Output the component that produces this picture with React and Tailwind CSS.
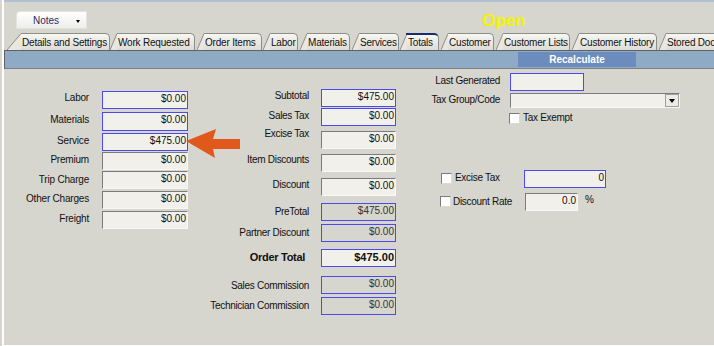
import React from 'react';

const tabs = [
  { label: 'Details and Settings', slant: 14, w: 'w-[89px]', gap: 'ml-[3px]' },
  { label: 'Work Requested', slant: 7, w: 'w-[78px]', gap: 'ml-0' },
  { label: 'Order Items', slant: 7, w: 'w-[58px]', gap: 'ml-[2px]' },
  { label: 'Labor', slant: 7, w: 'w-[28px]', gap: 'ml-[1px]' },
  { label: 'Materials', slant: 7, w: 'w-[43px]', gap: 'ml-[2px]' },
  { label: 'Services', slant: 7, w: 'w-[40px]', gap: 'ml-[2px]' },
  { label: 'Totals', slant: 7, w: 'w-[32px]', gap: 'ml-[1px]', active: true },
  { label: 'Customer', slant: 7, w: 'w-[46px]', gap: 'ml-[2px]' },
  { label: 'Customer Lists', slant: 7, w: 'w-[67px]', gap: 'ml-[2px]' },
  { label: 'Customer History', slant: 7, w: 'w-[78px]', gap: 'ml-[2px]' },
  { label: 'Stored Documents', slant: 7, w: 'w-[90px]', gap: 'ml-[2px]' },
];

function Tab({ t }) {
  return (
    <div className={`flex shrink-0 items-end h-[17px] ${t.gap}`}>
      <svg width={t.slant} height="17" className="block shrink-0">
        <polygon points={`0,17 ${t.slant},0 ${t.slant},17`} fill="#e8e7e1" />
        <line x1="0" y1="17" x2={t.slant} y2="0.5" stroke="#8e8e88" strokeWidth="1" />
        {t.active && <line x1={t.slant - 1} y1="1" x2={t.slant} y2="1" stroke="#1c2a6e" strokeWidth="2" />}
      </svg>
      <div
        className={`${t.w} shrink-0 h-[17px] border-r border-[#8e8e88] rounded-tr-[5px] bg-linear-to-b from-[#f7f7f3] to-[#dddcd5] pl-[1px] whitespace-nowrap overflow-hidden text-[10px] tracking-[-0.2px] text-[#111] ${
          t.active ? 'border-t-2 border-t-[#1c2a6e] leading-[16px]' : 'border-t leading-[17px]'
        }`}
      >
        {t.label}
      </div>
    </div>
  );
}

const kinds = {
  blue: 'border border-[#4a4af0] bg-[#f1f0ea] text-[#111]',
  sunk: 'border border-t-[#7b7b7b] border-l-[#7b7b7b] border-r-[#f7f7f3] border-b-[#f7f7f3] bg-[#f1f0ea] text-[#111]',
  blueGray: 'border border-[#4a4af0] bg-[#d6d5ce] text-[#333]',
};

function Field({ v, kind, w, h = 'h-[18px]', extra = '', bold }) {
  return (
    <div
      className={`${w} ${h} ${kinds[kind]} ${extra} shrink-0 flex justify-end pr-[1px] ${
        bold ? 'text-[11px] font-bold leading-[15px]' : 'text-[10px] leading-[14px]'
      }`}
    >
      {v}
    </div>
  );
}

const leftRows = [
  { l: 'Labor', v: '$0.00', k: 'blue', mt: 'mt-[22px]', h: 'h-[18px]', lm: '-mt-[1px]' },
  { l: 'Materials', v: '$0.00', k: 'blue', mt: 'mt-[3px]', h: 'h-[19px]', lm: 'mt-0' },
  { l: 'Service', v: '$475.00', k: 'blue', mt: 'mt-[2px]', h: 'h-[18px]', lm: 'mt-0' },
  { l: 'Premium', v: '$0.00', k: 'sunk', mt: 'mt-[1px]', h: 'h-[18px]', lm: 'mt-0' },
  { l: 'Trip Charge', v: '$0.00', k: 'sunk', mt: 'mt-[1px]', h: 'h-[18px]', lm: 'mt-[1px]' },
  { l: 'Other Charges', v: '$0.00', k: 'sunk', mt: 'mt-[2px]', h: 'h-[18px]', lm: 'mt-0' },
  { l: 'Freight', v: '$0.00', k: 'sunk', mt: 'mt-[2px]', h: 'h-[18px]', lm: 'mt-0' },
];

const midRows = [
  { l: 'Subtotal', v: '$475.00', k: 'blue', mt: 'mt-[20px]', lm: 'mt-[1px]' },
  { l: 'Sales Tax', v: '$0.00', k: 'blue', mt: 'mt-[1px]', lm: 'mt-[2px]' },
  { l: 'Excise Tax', v: '$0.00', k: 'sunk', mt: 'mt-[5px]', lm: '-mt-[3px]' },
  { l: 'Item Discounts', v: '$0.00', k: 'sunk', mt: 'mt-[5px]', lm: 'mt-0' },
  { l: 'Discount', v: '$0.00', k: 'sunk', mt: 'mt-[6px]', lm: 'mt-[1px]' },
  { l: 'PreTotal', v: '$475.00', k: 'blueGray', mt: 'mt-[7px]', lm: 'mt-[3px]' },
  { l: 'Partner Discount', v: '$0.00', k: 'blueGray', mt: 'mt-[3px]', lm: 'mt-[3px]' },
  { l: 'Order Total', v: '$475.00', k: 'blue', mt: 'mt-[7px]', lm: 'mt-[1px]', bold: true },
  { l: 'Sales Commission', v: '$0.00', k: 'blueGray', mt: 'mt-[9px]', lm: 'mt-[4px]' },
  { l: 'Technician Commission', v: '$0.00', k: 'blueGray', mt: 'mt-[3px]', lm: 'mt-[3px]' },
];

function Check() {
  return (
    <div className="w-[11px] h-[11px] shrink-0 bg-white border border-t-[#7b7b7b] border-l-[#7b7b7b] border-r-[#dcdcd6] border-b-[#dcdcd6]" />
  );
}

export default function App() {
  return (
    <div className="w-[714px] h-[346px] overflow-hidden bg-[#d6d5ce] pl-[2px] font-['Liberation_Sans',Arial,sans-serif] text-[#111]">
      <div className="relative h-[346px] border-l-2 border-white border-b border-b-white flex flex-col">
        {/* top line */}
        <div className="h-[2px] bg-[#b0c0d2] shrink-0" />
        {/* header */}
        <div className="h-[31px] shrink-0 flex items-start">
          <div className="mt-[9px] ml-[12px] w-[71px] h-[18px] shrink-0 rounded-tl-[4px] border border-[#e2e2de] bg-linear-to-b from-white to-[#eeeeea] flex items-center relative">
            <span className="ml-[16px] text-[10px] text-[#2b2b66]">Notes</span>
            <span className="ml-[17px] mt-[2px] w-0 h-0 border-l-[2.5px] border-r-[2.5px] border-t-[3px] border-l-transparent border-r-transparent border-t-black" />
          </div>
          <div className="mt-[9px] ml-[395px] text-[17px] leading-[19px] font-bold text-[#f4f400]">Open</div>
        </div>
        {/* tabs */}
        <div className="h-[17px] shrink-0 flex items-end overflow-hidden">
          {tabs.map((t) => (
            <Tab key={t.label} t={t} />
          ))}
        </div>
        {/* bar */}
        <div className="h-[19px] shrink-0 border-t border-b border-l border-t-[#5e6166] border-b-[#7d8085] border-l-[#5e6166] bg-[#8eaac5] flex">
          <div className="ml-[513px] mt-[1px] w-[118px] h-[15px] bg-[#6b8cbd] text-white font-bold text-[10px] leading-[15px] text-center">
            Recalculate
          </div>
        </div>
        {/* content */}
        <div className="flex flex-1 relative">
          {/* left column */}
          <div className="w-[184px] shrink-0 flex flex-col">
            {leftRows.map((r) => (
              <div key={r.l} className={`flex items-start ${r.mt}`}>
                <div className={`w-[85px] text-right text-[10px] leading-[15px] tracking-[-0.2px] ${r.lm}`}>{r.l}</div>
                <Field v={r.v} kind={r.k} w="w-[86px] ml-[13px]" h={r.h} />
              </div>
            ))}
          </div>
          {/* middle column */}
          <div className="w-[208px] shrink-0 flex flex-col">
            {midRows.map((r) => (
              <div key={r.l} className={`flex items-start ${r.mt}`}>
                <div
                  className={`w-[121px] text-right whitespace-nowrap ${r.lm} ${
                    r.bold ? 'text-[11px] font-bold leading-[14px] tracking-[-0.3px] pr-[4px]' : 'text-[10px] leading-[12px] tracking-[-0.3px]'
                  }`}
                >
                  {r.l}
                </div>
                <Field v={r.v} kind={r.k} w="w-[75px] ml-[12px]" bold={r.bold} />
              </div>
            ))}
          </div>
          {/* right column */}
          <div className="flex-1 flex flex-col">
            <div className="flex items-start mt-[4px]">
              <div className="w-[104px] text-right text-[10px] leading-[12px] tracking-[-0.3px] mt-[2px]">Last Generated</div>
              <div className="ml-[10px] w-[74px] h-[18px] border border-[#4a4af0] bg-[#f1f0ea]" />
            </div>
            <div className="flex items-start mt-[2px]">
              <div className="w-[104px] text-right text-[10px] leading-[12px] tracking-[-0.3px] mt-[1px]">Tax Group/Code</div>
              <div className="ml-[10px] w-[170px] h-[15px] border border-t-[#7b7b7b] border-l-[#7b7b7b] border-r-[#f7f7f3] border-b-[#f7f7f3] bg-[#f1f0ea] flex justify-end">
                <div className="w-[14px] h-[13px] bg-[#ecebe5] border border-[#a0a09a] flex items-center justify-center">
                  <span className="w-0 h-0 border-l-[3px] border-r-[3px] border-t-[4px] border-l-transparent border-r-transparent border-t-black" />
                </div>
              </div>
            </div>
            <div className="flex items-center mt-[4px] ml-[113px]">
              <Check />
              <span className="ml-[3px] text-[10px] leading-[12px] tracking-[-0.3px]">Tax Exempt</span>
            </div>
            <div className="flex items-start mt-[46px]">
              <div className="ml-[45px] mt-[3px]">
                <Check />
              </div>
              <div className="ml-[3px] w-[69px] mt-[2px] text-[10px] leading-[12px] tracking-[-0.3px]">Excise Tax</div>
              <Field v="0" kind="blue" w="w-[82px]" />
            </div>
            <div className="flex items-start mt-[5px]">
              <div className="ml-[44px] mt-[3px]">
                <Check />
              </div>
              <div className="ml-[2px] w-[72px] mt-[3px] text-[10px] leading-[12px] tracking-[-0.3px]">Discount Rate</div>
              <Field v="0.0" kind="sunk" w="w-[53px]" />
              <div className="ml-[7px] mt-[1px] text-[10px] leading-[12px]">%</div>
            </div>
          </div>
          {/* annotation arrow */}
          <svg className="absolute left-[182px] top-[59px]" width="56" height="32" viewBox="0 0 56 32">
            <path d="M0 13 L30 1 L27 11 L54 11 L54 21 L27 21 L29 30 Z" fill="#e1581b" />
          </svg>
        </div>
      </div>
    </div>
  );
}
